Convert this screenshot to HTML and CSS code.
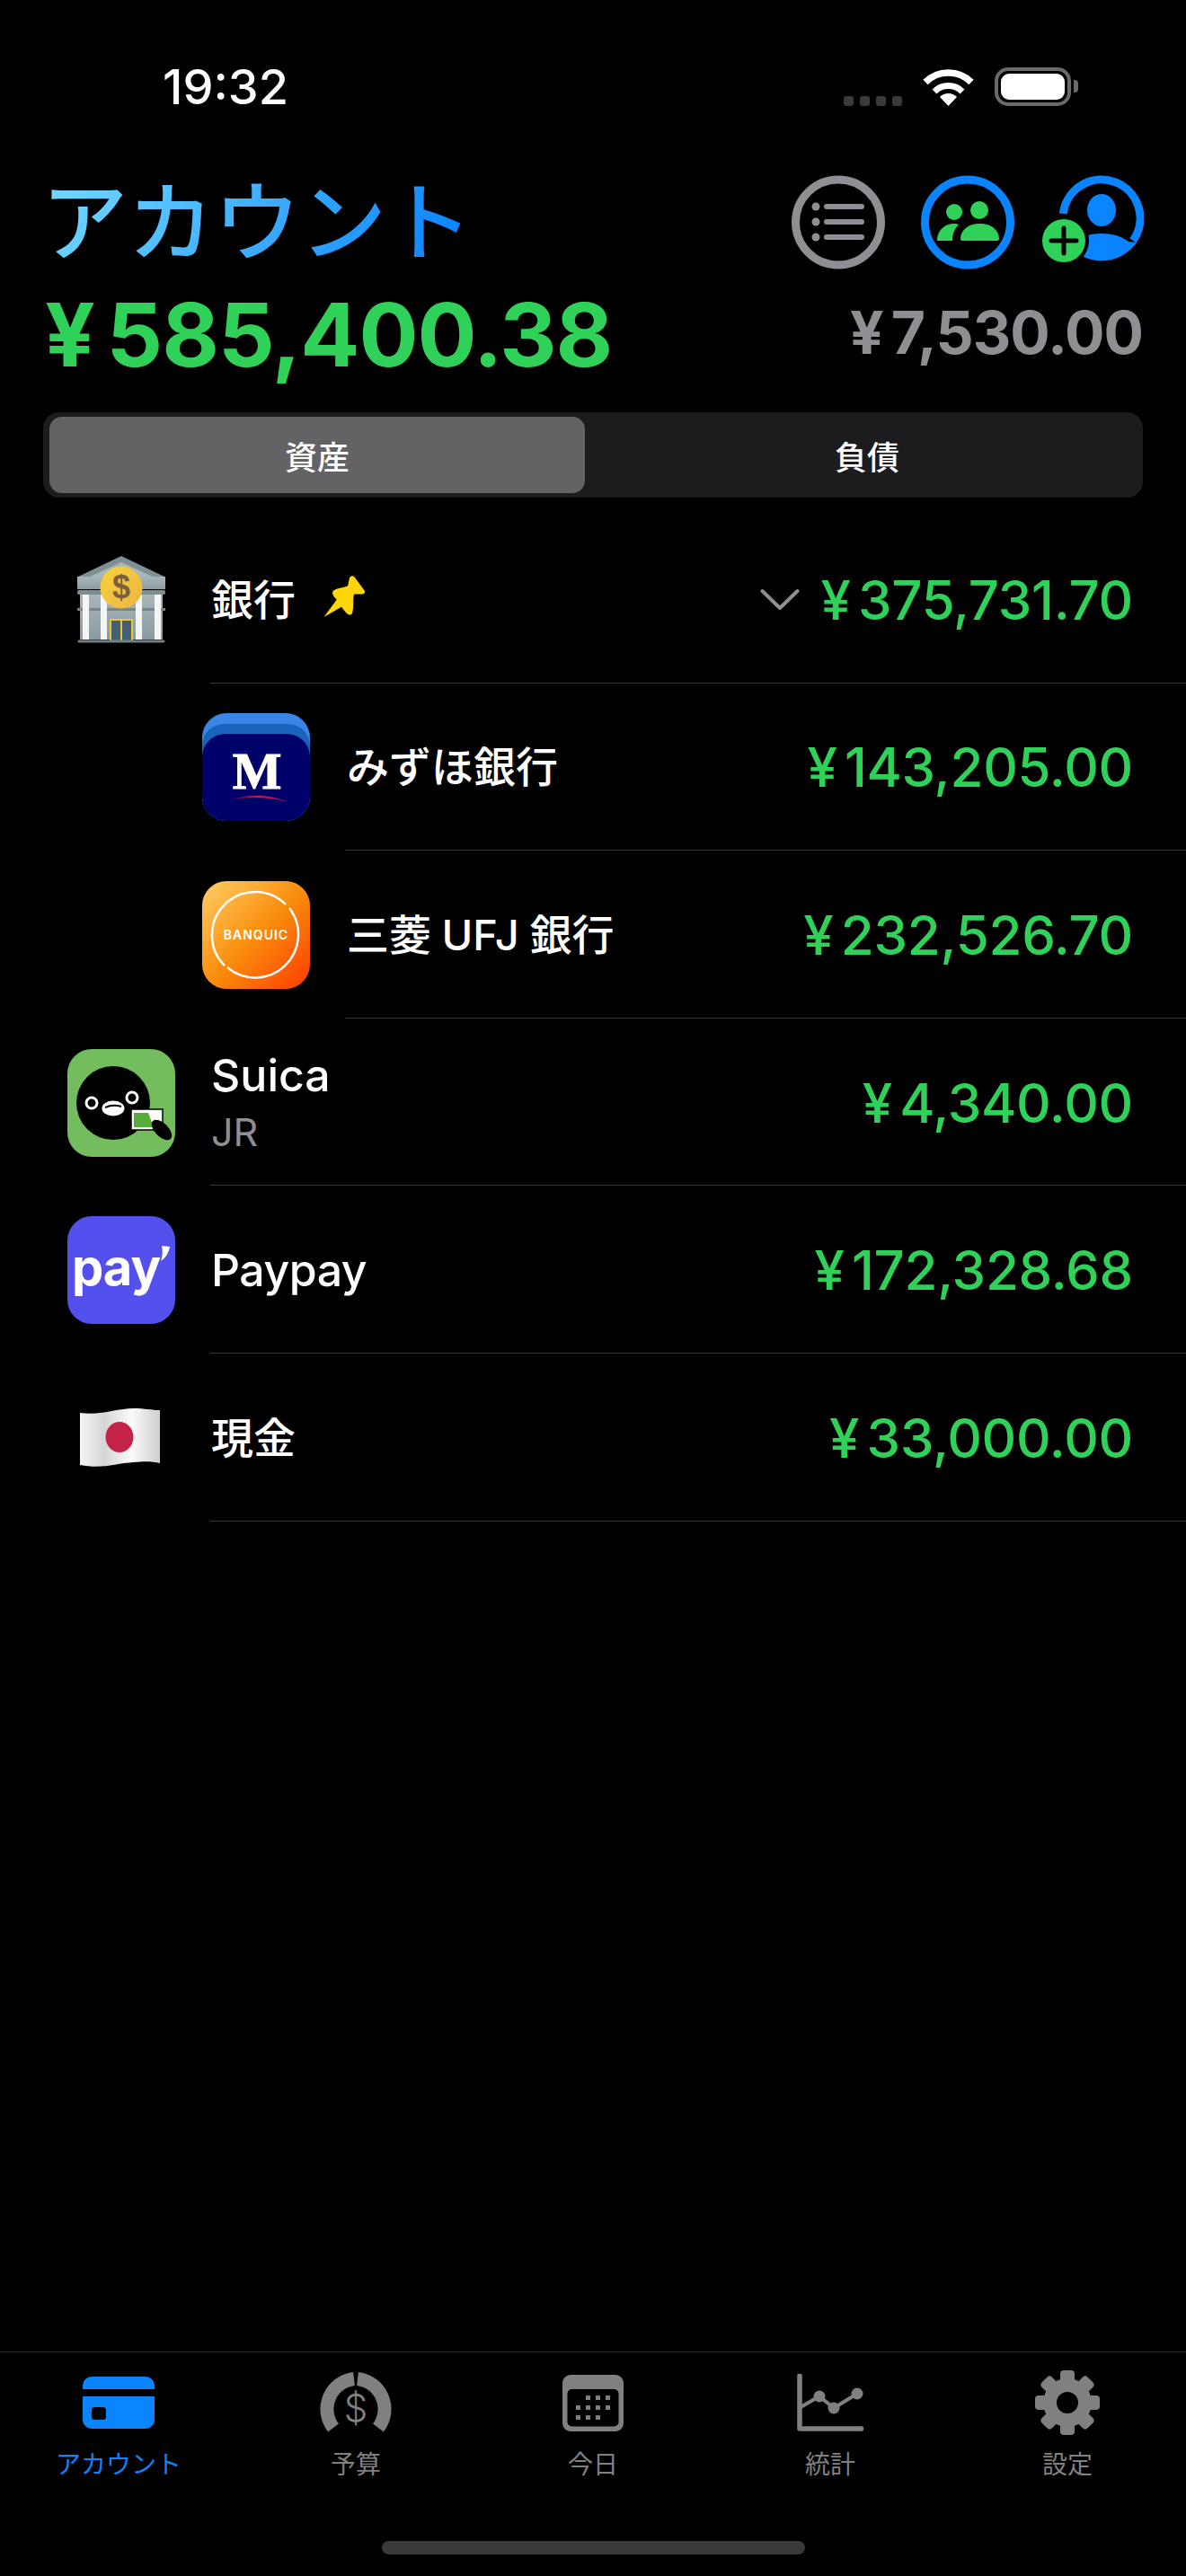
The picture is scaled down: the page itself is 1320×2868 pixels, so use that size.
FILE: index.html
```html
<!DOCTYPE html>
<html lang="ja">
  <head>
    <meta charset="UTF-8" />
    <meta name="viewport" content="width=device-width, initial-scale=1.0" />
    <title>アカウント</title>
    <link rel="stylesheet" href="styles.css">
  </head>

  <body>
    <div class="page">
      <div class="status">
        <div class="time">19:32</div>
        <div class="status-right">
          <div class="dots"><i></i><i></i><i></i><i></i></div>
          <svg class="wifi" width="57" height="43" viewBox="0 0 57 43">
            <path d="M28.5 43 L19 33 A13.5 13.5 0 0 1 38 33 Z" fill="#fff" />
            <path d="M13 27 A22 22 0 0 1 44 27" fill="none" stroke="#fff" stroke-width="7" />
            <path d="M3 16.500 A36 36 0 0 1 54 16.500" fill="none" stroke="#fff" stroke-width="7.500" />
          </svg>
          <div class="battery"><div class="battery-fill"></div></div>
          <div class="battery-nub"></div>
        </div>
      </div>

      <div class="head-top">
        <h1 class="title">アカウント</h1>
        <div class="head-icons">
          <svg width="104" height="105" viewBox="0 0 104 105">
            <circle cx="52" cy="52.500" r="47.500" fill="none" stroke="#8e8e93" stroke-width="9" />
            <circle cx="27" cy="35" r="4.500" fill="#8e8e93" />
            <circle cx="27" cy="52" r="4.500" fill="#8e8e93" />
            <circle cx="27" cy="69" r="4.500" fill="#8e8e93" />
            <path d="M39 35H78M39 52H78M39 69H78" stroke="#8e8e93" stroke-width="6" stroke-linecap="round" />
          </svg>
          <svg width="104" height="105" viewBox="0 0 104 105">
            <circle cx="52" cy="52.500" r="47.500" fill="none" stroke="#0a84ff" stroke-width="9" />
            <circle cx="37" cy="41" r="9" fill="#30d158" />
            <circle cx="65" cy="39" r="10" fill="#30d158" />
            <path d="M18 73 C18 61 27 54 37 54 C39 54 41 54.500 42 55 C37 60 35 66 35 73 Z" fill="#30d158" />
            <path d="M46 73 Q44 73 44 71 C44 61 53 54 65.500 54 C78 54 87 61 87 71 Q87 73 85 73 Z" fill="#30d158" />
          </svg>
          <svg width="113" height="100" viewBox="0 0 113 100">
            <path d="M23.300 43 A43 43 0 1 1 101 73" fill="none" stroke="#0a84ff" stroke-width="9" />
            <ellipse cx="66" cy="39" rx="16" ry="18" fill="#0a84ff" />
            <path d="M96 74 C88 68 78 65 66 65 C54 65 44 68 36 74 L27 75 A47.500 47.500 0 0 0 105 75 Z" fill="#0a84ff" />
            <circle cx="24" cy="73" r="28" fill="#000" />
            <circle cx="24" cy="73" r="24" fill="#30d158" />
            <path d="M10 73H38M24 59V87" stroke="#000" stroke-width="5" stroke-linecap="round" />
          </svg>
        </div>
      </div>

      <div class="head-sums">
        <div class="sum-main"><span class="yen">¥</span>585,400.38</div>
        <div class="sum-debt"><span class="yen">¥</span>7,530.00</div>
      </div>

      <div class="segment">
        <div class="segment-item active">資産</div>
        <div class="segment-item other">負債</div>
      </div>

      <div class="list">
        <div class="row">
          <svg class="row-icon" width="120" height="100" viewBox="-11 0 120 100">
            <defs>
              <linearGradient id="bankWall" x1="0" y1="0" x2="0" y2="1">
                <stop offset="0" stop-color="#a9b6b8" />
                <stop offset="1" stop-color="#8a9ba0" />
              </linearGradient>
              <linearGradient id="coin" x1="0" y1="0" x2="1" y2="1">
                <stop offset="0" stop-color="#f5d33a" />
                <stop offset="1" stop-color="#edb544" />
              </linearGradient>
            </defs>
            <path d="M49 1 L97 24 V33 H1 V24 Z" fill="#7f9094" />
            <path d="M49 8 L84 24 H14 Z" fill="#a7b6b8" />
            <rect x="0" y="24" width="98" height="14" fill="url(#bankWall)" />
            <rect x="0" y="39" width="98" height="5" rx="2" fill="#7c8e92" />
            <rect x="3" y="44" width="92" height="50" fill="url(#bankWall)" />
            <rect x="0" y="59" width="98" height="3" fill="#76888c" />
            <g fill="#f4f6f6">
              <rect x="6" y="44" width="7" height="50" />
              <rect x="26" y="44" width="7" height="50" />
              <rect x="65" y="44" width="7" height="50" />
              <rect x="86" y="44" width="7" height="50" />
            </g>
            <rect x="36" y="71" width="26" height="24" fill="#f2c230" />
            <rect x="38" y="73" width="10" height="22" fill="#3f6075" />
            <rect x="50" y="73" width="10" height="22" fill="#3f6075" />
            <path d="M2 96H96" stroke="#6f8185" stroke-width="3" stroke-linecap="round" />
            <circle cx="49" cy="36" r="23.500" fill="url(#coin)" />
            <text class="bank-dollar" x="49" y="48" text-anchor="middle">$</text>
          </svg>
          <div class="name-wrap">
            <div class="name">銀行</div>
            <svg class="pin" width="47" height="47" viewBox="0 0 45 46">
              <path d="M0 46 L14 27 C9 22 8 19 11 17 C15 14 22 14 26 12 L28 3 Q30 0 33 2 L44 17 Q46 20 42 21 L33 21 C31 26 33 34 31 41 C30 45 27 44 24 41 L19 35 Z" fill="#ffd60a" />
            </svg>
          </div>
          <svg class="chevron" width="44" height="26" viewBox="0 0 44 26">
            <path d="M2.500 3 L22 22 L41.500 3" fill="none" stroke="#8e8e93" stroke-width="4" stroke-linecap="round" stroke-linejoin="round" />
          </svg>
          <div class="amount"><span class="yen">¥</span>375,731.70</div>
        </div>
        <div class="sep"></div>

        <div class="row child">
          <svg class="row-icon" width="120" height="120" viewBox="0 0 120 120">
            <defs>
              <linearGradient id="swoosh" x1="0" y1="0" x2="1" y2="0">
                <stop offset="0" stop-color="#00006b" />
                <stop offset="0.5" stop-color="#e0103f" />
                <stop offset="1" stop-color="#b0104f" />
              </linearGradient>
              <clipPath id="mizuhoClip">
                <rect width="120" height="120" rx="27" />
              </clipPath>
            </defs>
            <g clip-path="url(#mizuhoClip)">
              <rect width="120" height="120" fill="#3a86e8" />
              <path d="M0 38 C0 20 12 12 28 12 H92 C108 12 120 20 120 38 V120 H0 Z" fill="#1a62bb" />
              <path d="M0 50 C0 33 12 23 28 23 H92 C108 23 120 33 120 50 V120 H0 Z" fill="#00006b" />
            </g>
            <text class="mizuho-m" x="61" y="84" text-anchor="middle">M</text>
            <path d="M28 98 C50 89 72 90 97 99 C72 93 50 92 28 98 Z" fill="url(#swoosh)" />
          </svg>
          <div class="name-wrap"><div class="name">みずほ銀行</div></div>
          <div class="amount"><span class="yen">¥</span>143,205.00</div>
        </div>
        <div class="sep sep-child"></div>

        <div class="row child">
          <svg class="row-icon" width="120" height="120" viewBox="0 0 120 120">
            <defs>
              <linearGradient id="banquic" x1="0" y1="0" x2="1" y2="1">
                <stop offset="0" stop-color="#ffcf68" />
                <stop offset="0.5" stop-color="#f98e0c" />
                <stop offset="1" stop-color="#ff3a00" />
              </linearGradient>
            </defs>
            <rect width="120" height="120" rx="27" fill="url(#banquic)" />
            <path d="M93 26 A48 48 0 0 0 25 94" fill="none" stroke="#fff" stroke-width="2.500" />
            <path d="M97 30 A48 48 0 0 1 28 96" fill="none" stroke="#fff" stroke-width="2.500" />
            <text class="banquic-text" x="60" y="65" text-anchor="middle">BANQUIC</text>
          </svg>
          <div class="name-wrap"><div class="name">三菱 UFJ 銀行</div></div>
          <div class="amount"><span class="yen">¥</span>232,526.70</div>
        </div>
        <div class="sep sep-child"></div>

        <div class="row">
          <svg class="row-icon" width="120" height="120" viewBox="0 0 120 120">
            <rect width="120" height="120" rx="27" fill="#74bd5f" />
            <ellipse cx="51" cy="60" rx="41" ry="41" fill="#000" />
            <circle cx="27" cy="60" r="6" fill="none" stroke="#fff" stroke-width="3" />
            <circle cx="72" cy="54" r="6" fill="none" stroke="#fff" stroke-width="3" />
            <ellipse cx="51" cy="66" rx="12.500" ry="8.500" fill="#fff" />
            <path d="M42 65 Q51 61 60 64" fill="none" stroke="#000" stroke-width="2" />
            <rect x="71" y="67" width="35" height="23" fill="#fff" stroke="#000" stroke-width="1.500" />
            <path d="M74 71 H90 L96 87 H74 Z" fill="#58ad3a" />
            <ellipse cx="105" cy="90" rx="14" ry="7.500" transform="rotate(45 105 90)" fill="#000" />
          </svg>
          <div class="name-wrap">
            <div class="name-stack">
              <div class="name latin">Suica</div>
              <div class="sub">JR</div>
            </div>
          </div>
          <div class="amount"><span class="yen">¥</span>4,340.00</div>
        </div>
        <div class="sep"></div>

        <div class="row">
          <svg class="row-icon" width="120" height="120" viewBox="0 0 120 120">
            <rect width="120" height="120" rx="27" fill="#5450ee" />
            <text class="pay-text" x="5" y="77">pay</text>
            <path d="M105 33 L114 34 Q112 45 104 50 Q107 42 105 33 Z" fill="#fff" />
          </svg>
          <div class="name-wrap"><div class="name latin tight">Paypay</div></div>
          <div class="amount"><span class="yen">¥</span>172,328.68</div>
        </div>
        <div class="sep"></div>

        <div class="row">
          <svg class="row-icon" width="120" height="68" viewBox="-14 0 120 68">
            <defs>
              <linearGradient id="flag" x1="0" y1="0" x2="1" y2="0">
                <stop offset="0" stop-color="#f4f4f4" />
                <stop offset="0.3" stop-color="#d6d6d6" />
                <stop offset="0.65" stop-color="#fafafa" />
                <stop offset="1" stop-color="#cfcfcf" />
              </linearGradient>
            </defs>
            <path d="M0 6 C25 9 40 1 60 1 C72 1 80 3 89 3 V62 C80 60 72 60 60 61 C40 62 25 69 0 64 Z" fill="url(#flag)" />
            <ellipse cx="44" cy="33" rx="15.500" ry="17" fill="#c4234a" />
          </svg>
          <div class="name-wrap"><div class="name">現金</div></div>
          <div class="amount"><span class="yen">¥</span>33,000.00</div>
        </div>
        <div class="sep"></div>
      </div>

      <div class="tabbar">
        <div class="tabs">
          <div class="tab active">
            <div class="tab-icon">
              <svg width="80" height="58" viewBox="0 0 80 58">
                <rect width="80" height="58" rx="10" fill="#0a84ff" />
                <rect y="14" width="80" height="8" fill="#000" />
                <rect x="10" y="34" width="16" height="14" rx="3.500" fill="#000" />
              </svg>
            </div>
            <div class="tab-label">アカウント</div>
          </div>
          <div class="tab">
            <div class="tab-icon budget">
              <svg width="84" height="70" viewBox="0 0 84 70">
                <path d="M40 8.500 A34 34 0 0 0 17 63" fill="none" stroke="#808080" stroke-width="15" />
                <path d="M44 8.500 A34 34 0 0 1 67 63" fill="none" stroke="#808080" stroke-width="15" />
                <text class="budget-dollar" x="42" y="56" text-anchor="middle">$</text>
              </svg>
            </div>
            <div class="tab-label">予算</div>
          </div>
          <div class="tab">
            <div class="tab-icon">
              <svg width="68" height="63" viewBox="0 0 68 63">
                <rect width="68" height="63" rx="9" fill="#808080" />
                <rect x="5.500" y="16" width="57" height="41.500" rx="5" fill="#000" />
                <g fill="#808080">
                  <rect x="26" y="23" width="5" height="5" />
                  <rect x="37" y="23" width="5" height="5" />
                  <rect x="48" y="23" width="5" height="5" />
                  <rect x="15" y="34" width="5" height="5" />
                  <rect x="26" y="34" width="5" height="5" />
                  <rect x="37" y="34" width="5" height="5" />
                  <rect x="48" y="34" width="5" height="5" />
                  <rect x="15" y="45" width="5" height="5" />
                  <rect x="26" y="45" width="5" height="5" />
                  <rect x="37" y="45" width="5" height="5" />
                </g>
              </svg>
            </div>
            <div class="tab-label">今日</div>
          </div>
          <div class="tab">
            <div class="tab-icon">
              <svg width="74" height="64" viewBox="0 0 74 64">
                <path d="M3 2 V61 H72" fill="none" stroke="#808080" stroke-width="5.500" stroke-linecap="round" stroke-linejoin="round" />
                <path d="M4 37 L25 25 L41 38 L67 22" fill="none" stroke="#808080" stroke-width="4" />
                <circle cx="25" cy="25" r="6.500" fill="#808080" />
                <circle cx="41" cy="38" r="6.500" fill="#808080" />
                <circle cx="67" cy="22" r="6.500" fill="#808080" />
              </svg>
            </div>
            <div class="tab-label">統計</div>
          </div>
          <div class="tab">
            <div class="tab-icon">
              <svg width="72" height="72" viewBox="0 0 72 72">
                <g fill="#808080">
                  <circle cx="36" cy="36" r="27" />
                  <rect x="28" y="0" width="16" height="18" rx="4" />
                  <rect x="28" y="0" width="16" height="18" rx="4" transform="rotate(45 36 36)" />
                  <rect x="28" y="0" width="16" height="18" rx="4" transform="rotate(90 36 36)" />
                  <rect x="28" y="0" width="16" height="18" rx="4" transform="rotate(135 36 36)" />
                  <rect x="28" y="0" width="16" height="18" rx="4" transform="rotate(180 36 36)" />
                  <rect x="28" y="0" width="16" height="18" rx="4" transform="rotate(225 36 36)" />
                  <rect x="28" y="0" width="16" height="18" rx="4" transform="rotate(270 36 36)" />
                  <rect x="28" y="0" width="16" height="18" rx="4" transform="rotate(315 36 36)" />
                </g>
                <circle cx="36" cy="36" r="12" fill="#000" />
              </svg>
            </div>
            <div class="tab-label">設定</div>
          </div>
        </div>
        <div class="home-bar"></div>
      </div>
    </div>
  </body>
</html>
```

FILE: styles.css
```css
* {
  box-sizing: border-box;
}
body {
  margin: 0;
  background-color: #000;
  color: #fff;
  font-family: Inter, "Noto Sans CJK JP", sans-serif;
}
svg {
  display: block;
  flex-shrink: 0;
}
.page {
  width: 1320px;
  height: 2868px;
  display: flex;
  flex-direction: column;
  overflow: hidden;
}

/* status bar */
.status {
  height: 195px;
  padding: 75px 120px 0 181px;
  display: flex;
  justify-content: space-between;
  align-items: flex-start;
}
.time {
  font-size: 54px;
  font-weight: 500;
  line-height: 44px;
}
.status-right {
  display: flex;
  align-items: flex-end;
  height: 43px;
}
.dots {
  display: flex;
  gap: 7px;
  margin-right: 23px;
}
.dots i {
  width: 11px;
  height: 11px;
  border-radius: 3px;
  background-color: #3a3a3c;
}
.wifi {
  margin-right: 23px;
}
.battery {
  width: 85px;
  height: 43px;
  border: 4px solid #6a6a6c;
  border-radius: 15px;
  padding: 3px;
}
.battery-fill {
  width: 100%;
  height: 100%;
  background-color: #fff;
  border-radius: 9px;
}
.battery-nub {
  width: 5px;
  height: 14px;
  margin: 0 0 15px 3px;
  background-color: #6a6a6c;
  border-radius: 0 4px 4px 0;
}

/* header */
.head-top {
  height: 105px;
  padding: 0 47px 0 46px;
  display: flex;
  justify-content: space-between;
  align-items: flex-start;
}
.title {
  margin: 0;
  font-size: 96px;
  font-weight: 500;
  line-height: 105px;
  background: linear-gradient(115deg, #70d6ff 5%, #0a84ff 95%);
  -webkit-background-clip: text;
  background-clip: text;
  color: transparent;
}
.head-icons {
  display: flex;
  gap: 40px;
}
.head-icons svg:last-child {
  margin-left: -9px;
}
.head-sums {
  height: 145px;
  padding: 0 48px 0 50px;
  display: flex;
  justify-content: space-between;
  align-items: center;
}
.sum-main {
  font-size: 98px;
  line-height: 145px;
  font-weight: 700;
  letter-spacing: -1px;
  color: #30d158;
}
.sum-debt {
  margin-bottom: 5px;
  font-size: 66px;
  font-weight: 700;
  letter-spacing: -1px;
  color: #8e8e93;
}
.yen {
  margin-right: 0.14em;
}

/* segmented control */
.segment {
  margin: 14px 48px 0 48px;
  height: 95px;
  padding: 5px 7px;
  display: grid;
  grid-template-columns: 596px 1fr;
  background-color: #1c1c1e;
  border-radius: 18px;
}
.segment-item {
  display: flex;
  align-items: center;
  justify-content: center;
  font-size: 36px;
  font-weight: 500;
  border-radius: 14px;
}
.segment-item.active {
  background-color: #636366;
}
.segment-item.other {
  padding-left: 14px;
}

/* account rows */
.list {
  margin-top: 20px;
}
.row {
  height: 185.6px;
  padding: 2px 59px 0 75px;
  display: flex;
  align-items: center;
}
.row.child {
  padding-left: 225px;
}
.name-wrap {
  flex: 1;
  margin-left: 40px;
  display: flex;
  align-items: center;
}
.row.child .name-wrap {
  margin-left: 41px;
}
.name {
  font-size: 47px;
  font-weight: 500;
  line-height: 60px;
  word-spacing: -1px;
}
.name.latin {
  font-size: 50px;
}
.name.tight {
  letter-spacing: -0.5px;
}
.name-stack .name {
  line-height: 58px;
}
.sub {
  margin-top: 7px;
  font-size: 43px;
  line-height: 54px;
  color: #8e8e93;
}
.pin {
  margin: 0 0 8px 31px;
}
.chevron {
  margin-right: 24px;
}
.amount {
  font-size: 60px;
  font-weight: 500;
  letter-spacing: -0.3px;
  color: #30d158;
  white-space: nowrap;
}
.sep {
  height: 1px;
  margin-left: 234px;
  background-color: #38383a;
}
.sep-child {
  margin-left: 384px;
}

/* icon text */
.bank-dollar {
  font-family: "Liberation Sans", sans-serif;
  font-size: 36px;
  font-weight: 700;
  fill: #7d5f3e;
}
.mizuho-m {
  font-family: "Liberation Serif", serif;
  font-size: 58px;
  font-weight: 700;
  fill: #fff;
  stroke: #fff;
  stroke-width: 1px;
}
.banquic-text {
  font-size: 14px;
  font-weight: 600;
  letter-spacing: 1px;
  fill: #fff;
}
.pay-text {
  font-size: 56px;
  font-weight: 700;
  letter-spacing: -1px;
  fill: #fff;
}
.budget-dollar {
  font-size: 42px;
  font-weight: 300;
  fill: #808080;
}

/* tab bar */
.tabbar {
  margin-top: auto;
  height: 250px;
  border-top: 1px solid #2c2c2e;
  padding-top: 20px;
}
.tabs {
  display: grid;
  grid-template-columns: repeat(5, 1fr);
}
.tab {
  display: flex;
  flex-direction: column;
  align-items: center;
  color: #808080;
}
.tab.active {
  color: #0a84ff;
}
.tab-icon {
  height: 72px;
  display: flex;
  align-items: center;
  justify-content: center;
}
.tab-label {
  margin-top: 13px;
  font-size: 28px;
  line-height: 40px;
}
.home-bar {
  width: 471px;
  height: 15px;
  margin: 65px auto 0;
  border-radius: 8px;
  background-color: #3a3a3c;
}
```
